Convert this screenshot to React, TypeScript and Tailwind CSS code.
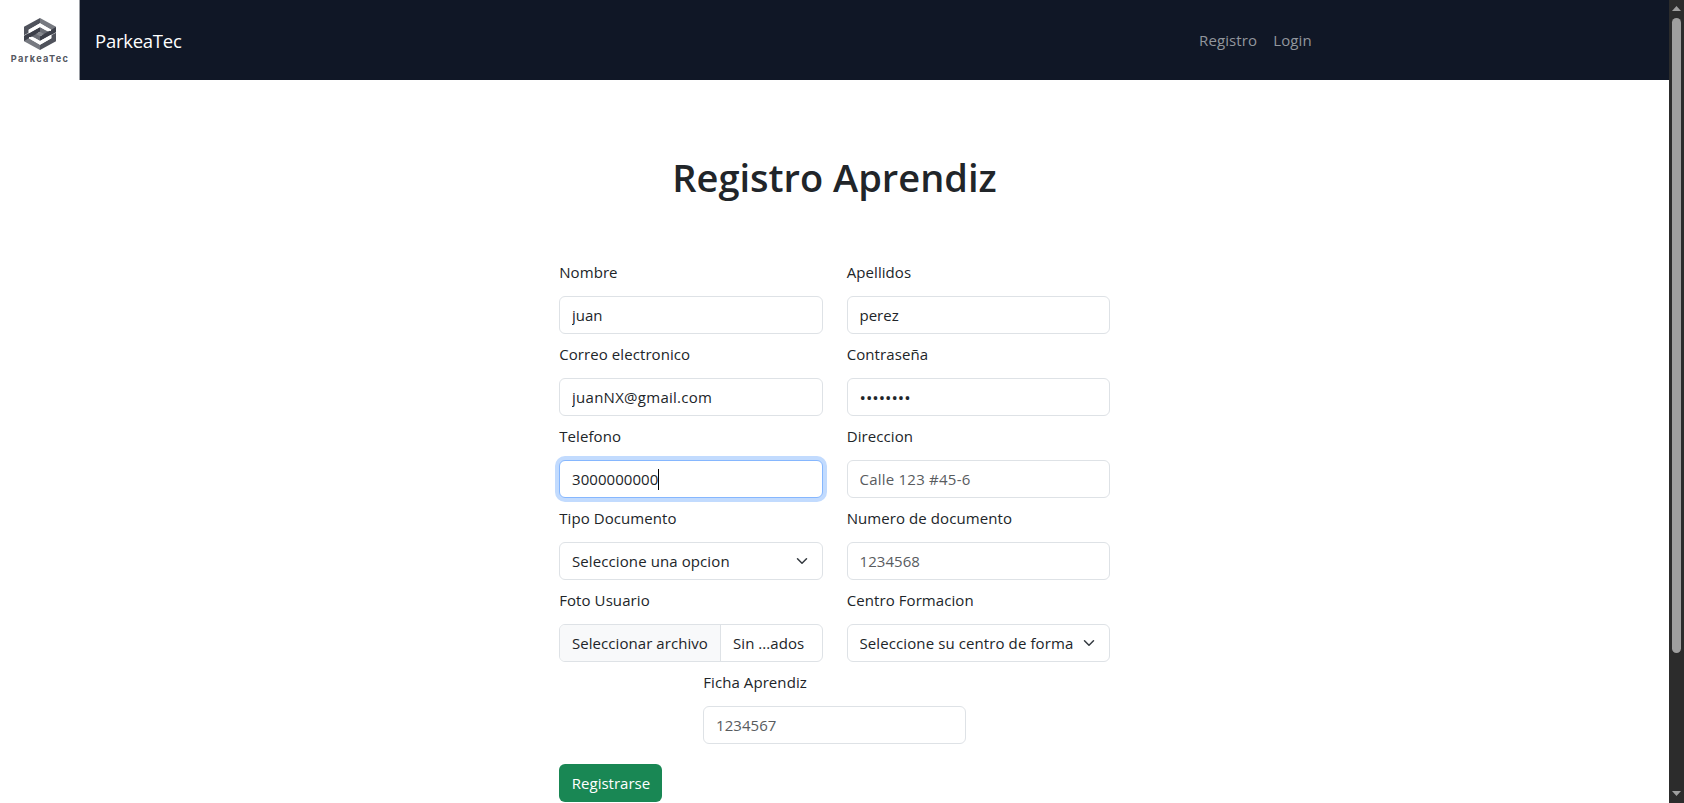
import type { ReactNode } from "react";

const control =
  "block h-[38px] w-full rounded-md border border-[#dee2e6] bg-white px-3 leading-6 text-[#212529] outline-none placeholder:text-[#595c5f] placeholder:opacity-100";

function Field({ label, children }: { label: string; children: ReactNode }) {
  return (
    <div className="min-w-0">
      <label className="block pt-2 pb-3 pl-[0.2px] leading-6 tracking-[0.08px]">{label}</label>
      {children}
    </div>
  );
}

function Chevron() {
  return (
    <svg viewBox="0 0 16 16" className="h-3 w-4 shrink-0" fill="none" stroke="#343a40" strokeWidth="2" strokeLinecap="round" strokeLinejoin="round">
      <path d="m2 5 6 6 6-6" />
    </svg>
  );
}

function Select({ text }: { text: string }) {
  return (
    <div className="flex h-[38px] items-center justify-between rounded-md border border-[#dee2e6] bg-white px-3">
      <span className="overflow-hidden whitespace-nowrap leading-6 tracking-[0.1px]">{text}</span>
      <Chevron />
    </div>
  );
}

function Logo() {
  return (
    <div className="flex h-20 w-20 shrink-0 flex-col items-center border-r border-[#9a9da3] bg-white pt-[18px]">
      <svg viewBox="0 0 96 96" className="h-8 w-8 shrink-0">
        <path d="M0 26 48 0v16L14 35v9L0 52z" fill="#50535c" />
        <path d="M48 0 96 26v17l-14 8V35L48 16z" fill="#777a81" />
        <path d="M96 70 48 96V80l34-19v-9l14-8z" fill="#50535c" />
        <path d="M48 96 0 70V53l14-8v16l34 19z" fill="#777a81" />
        <path d="m48 27 34 19-17 10-17-9z" fill="#6b6e76" />
        <path d="M48 69 14 50l17-10 17 9z" fill="#6b6e76" />
        <path d="M0 54 48 27v14L0 69z" fill="#3c3f49" />
        <path d="M96 42 48 69V55l48-28z" fill="#3c3f49" />
        <path d="m48 41 12 7-12 7-12-7z" fill="#85888e" />
        <path d="m48 16 33 19v4L65 37 48 27 14 46V35z" fill="#ffffff" />
        <path d="M48 80 15 61v-4l16 2 17 10 34-19v11z" fill="#ffffff" />
      </svg>
      <span className="mt-[4px] ml-px font-['Inter',sans-serif] text-[9.2px] leading-[10px] font-bold tracking-[1.3px] text-[#55585f]">ParkeaTec</span>
    </div>
  );
}

function Scrollbar() {
  return (
    <div className="flex w-[15px] shrink-0 flex-col items-center bg-[#2c2c2c] pt-[6px] pb-[7px]">
      <svg viewBox="0 0 9 5" className="h-[5px] w-[9px] shrink-0" fill="#9f9f9f">
        <path d="M4.5 0 9 5H0z" />
      </svg>
      <div className="mt-[7px] h-[635px] w-[9px] shrink-0 rounded-full bg-[#9f9f9f]" />
      <div className="flex-1" />
      <svg viewBox="0 0 9 5" className="h-[5px] w-[9px] shrink-0" fill="#9f9f9f">
        <path d="M0 0h9L4.5 5z" />
      </svg>
    </div>
  );
}

export default function App() {
  return (
    <div className="flex h-[803px] w-[1684px] overflow-hidden bg-white font-['Open_Sans','Noto_Sans',sans-serif] text-[15px] text-[#212529]">
      <div className="min-w-0 flex-1">
        <nav className="flex h-20 items-center bg-[#101726]">
          <Logo />
          <span className="ml-[15px] flex-1 pt-[2px] text-[18.5px] leading-[30px] tracking-[-0.25px] text-white">ParkeaTec</span>
          <div className="flex w-[470px] gap-4 leading-6 tracking-[0.12px] text-[#92969d]">
            <a>Registro</a>
            <a>Login</a>
          </div>
        </nav>
        <h1 className="mt-[73px] text-center text-[38px] leading-[48px] font-semibold">Registro Aprendiz</h1>
        <form className="mx-auto mt-[51px] w-[551px]">
          <div className="grid grid-cols-2 gap-x-6">
            <Field label="Nombre">
              <input className={control} defaultValue="juan" />
            </Field>
            <Field label="Apellidos">
              <input className={control} defaultValue="perez" />
            </Field>
            <Field label="Correo electronico">
              <input className={`${control} tracking-[0.27px]`} defaultValue="juanNX@gmail.com" />
            </Field>
            <Field label="Contraseña">
              <input type="password" className={`${control} text-[17px]`} defaultValue="password" />
            </Field>
            <Field label="Telefono">
              <div className="flex h-[38px] items-center rounded-md border border-[#86b7fe] bg-white px-3 ring-4 ring-[#c2dbfe]">
                <span className="leading-6 tracking-[0.06px]">3000000000</span>
                <span className="h-[21px] w-px bg-black" />
              </div>
            </Field>
            <Field label="Direccion">
              <input className={`${control} tracking-[0.23px]`} placeholder="Calle 123 #45-6" />
            </Field>
            <Field label="Tipo Documento">
              <Select text="Seleccione una opcion" />
            </Field>
            <Field label="Numero de documento">
              <input className={`${control} tracking-[0.06px]`} placeholder="1234568" />
            </Field>
            <Field label="Foto Usuario">
              <div className="flex h-[38px] items-center overflow-hidden rounded-md border border-[#dee2e6] bg-white leading-6 whitespace-nowrap">
                <span className="flex h-full w-[161px] shrink-0 items-center border-r border-[#dee2e6] bg-[#f8f9fa] pl-3 tracking-[0.06px]">Seleccionar archivo</span>
                <span className="pl-3 tracking-[0.06px]">Sin ...ados</span>
              </div>
            </Field>
            <Field label="Centro Formacion">
              <Select text="Seleccione su centro de forma" />
            </Field>
          </div>
          <div className="mx-auto w-[263px]">
            <Field label="Ficha Aprendiz">
              <input className={`${control} tracking-[0.06px]`} placeholder="1234567" />
            </Field>
          </div>
          <button type="button" className="mt-5 h-[38px] w-[103px] rounded-md bg-[#198754] pl-px leading-6 text-white">
            Registrarse
          </button>
        </form>
      </div>
      <Scrollbar />
    </div>
  );
}
